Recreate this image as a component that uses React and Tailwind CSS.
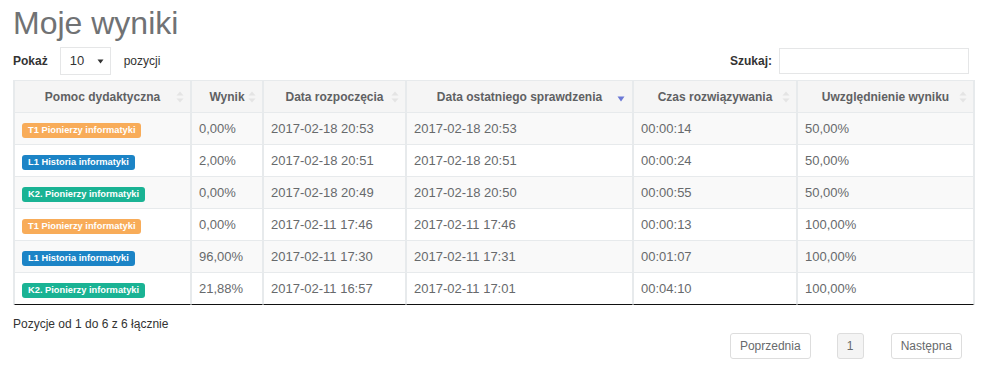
import React from "react";

const rows = [
  { badge: "T1 Pionierzy informatyki", color: "bg-[#f8ac59]", wynik: "0,00%", start: "2017-02-18 20:53", last: "2017-02-18 20:53", czas: "00:00:14", uw: "50,00%" },
  { badge: "L1 Historia informatyki", color: "bg-[#1c84c6]", wynik: "2,00%", start: "2017-02-18 20:51", last: "2017-02-18 20:51", czas: "00:00:24", uw: "50,00%" },
  { badge: "K2. Pionierzy informatyki", color: "bg-[#1ab394]", wynik: "0,00%", start: "2017-02-18 20:49", last: "2017-02-18 20:50", czas: "00:00:55", uw: "50,00%" },
  { badge: "T1 Pionierzy informatyki", color: "bg-[#f8ac59]", wynik: "0,00%", start: "2017-02-11 17:46", last: "2017-02-11 17:46", czas: "00:00:13", uw: "100,00%" },
  { badge: "L1 Historia informatyki", color: "bg-[#1c84c6]", wynik: "96,00%", start: "2017-02-11 17:30", last: "2017-02-11 17:31", czas: "00:01:07", uw: "100,00%" },
  { badge: "K2. Pionierzy informatyki", color: "bg-[#1ab394]", wynik: "21,88%", start: "2017-02-11 16:57", last: "2017-02-11 17:01", czas: "00:04:10", uw: "100,00%" },
];

function SortBoth() {
  return (
    <svg width="8" height="12" viewBox="0 0 8 12" className="absolute right-[6px] top-[10px]">
      <path d="M4 0.5 L7.5 4.5 L0.5 4.5 Z" fill="#e4e4e4" />
      <path d="M4 11.5 L7.5 7.5 L0.5 7.5 Z" fill="#e4e4e4" />
    </svg>
  );
}

function SortDesc() {
  return (
    <svg width="8" height="6" viewBox="0 0 8 6" className="absolute right-[7px] top-[15px]">
      <path d="M0.5 0.5 L7.5 0.5 L4 5.5 Z" fill="#6b78d6" />
    </svg>
  );
}

const headers = [
  { label: "Pomoc dydaktyczna", w: "w-[177px]" },
  { label: "Wynik", w: "w-[72px]" },
  { label: "Data rozpoczęcia", w: "w-[143px]" },
  { label: "Data ostatniego sprawdzenia", w: "w-[227px]", sorted: true },
  { label: "Czas rozwiązywania", w: "w-[164px]" },
  { label: "Uwzględnienie wyniku", w: "w-[177px]" },
];

export default function App() {
  return (
    <div className="w-[993px] h-[370px] bg-white text-[#676a6c] font-['Liberation_Sans',Arial,sans-serif] text-[13px] overflow-hidden">
      <div className="pl-[13px] pr-[20px]">
        <h2 className="text-[32px] leading-[36px] font-normal text-[#707274] pt-[5px]">Moje wyniki</h2>
        <div className="flex items-center justify-between mt-[6px] h-[28px]">
          <div className="flex items-center">
            <span className="font-bold text-[12px] text-[#333]">Pokaż</span>
            <div className="ml-[12px] w-[51px] h-[28px] border border-[#e5e6e7] flex items-center pl-[9px] pr-[6px] justify-between text-[13px] text-[#333]">
              <span>10</span>
              <svg width="7" height="5" viewBox="0 0 7 5"><path d="M0.5 0.5 L6.5 0.5 L3.5 4.5 Z" fill="#333" /></svg>
            </div>
            <span className="ml-[13px] text-[12px] text-[#333]">pozycji</span>
          </div>
          <div className="flex items-center mr-[4px]">
            <span className="font-bold text-[12px] text-[#333]">Szukaj:</span>
            <div className="ml-[7px] w-[190px] h-[26px] border border-[#e5e6e7]" />
          </div>
        </div>
        <table className="mt-[5px] w-[960px] table-fixed border-separate border-spacing-0 border-t border-l border-r border-[#e7eaec]">
          <thead>
            <tr>
              {headers.map((h) => (
                <th key={h.label} className={`${h.w} relative h-[32px] bg-[#f5f5f5] border border-[#e7eaec] border-t-0 font-bold text-[12px] text-[#5f6163] text-center`}>
                  {h.label}
                  {h.sorted ? <SortDesc /> : <SortBoth />}
                </th>
              ))}
            </tr>
          </thead>
          <tbody>
            {rows.map((r, i) => {
              const bg = i % 2 === 0 ? "bg-[#f9f9f9]" : "bg-white";
              const last = i === rows.length - 1;
              const cell = `${bg} h-[32px] border border-[#e7eaec] border-t-0 pl-[7px] pr-[8px] text-left align-middle ${last ? "border-b-[#111]" : ""}`;
              return (
                <tr key={i}>
                  <td className={cell}>
                    <span className={`${r.color} inline-block text-white font-bold text-[9.3px] leading-[15px] px-[6px] rounded-[3px] whitespace-nowrap`}>{r.badge}</span>
                  </td>
                  <td className={cell}>{r.wynik}</td>
                  <td className={cell}>{r.start}</td>
                  <td className={cell}>{r.last}</td>
                  <td className={cell}>{r.czas}</td>
                  <td className={cell}>{r.uw}</td>
                </tr>
              );
            })}
          </tbody>
        </table>
        <div className="mt-[10px] text-[12px] text-[#333]">Pozycje od 1 do 6 z 6 łącznie</div>
        <div className="flex justify-end mt-0 mr-[11px] text-[12px] text-[#676a6c] gap-0">
          <div className="h-[26px] px-[9px] flex items-center border border-[#ddd] rounded-[3px]">Poprzednia</div>
          <div className="ml-[26px] h-[26px] w-[27px] flex items-center justify-center border border-[#ddd] bg-[#f4f4f4] rounded-[3px]">1</div>
          <div className="ml-[27px] h-[26px] px-[9px] flex items-center border border-[#ddd] rounded-[3px]">Następna</div>
        </div>
      </div>
    </div>
  );
}
